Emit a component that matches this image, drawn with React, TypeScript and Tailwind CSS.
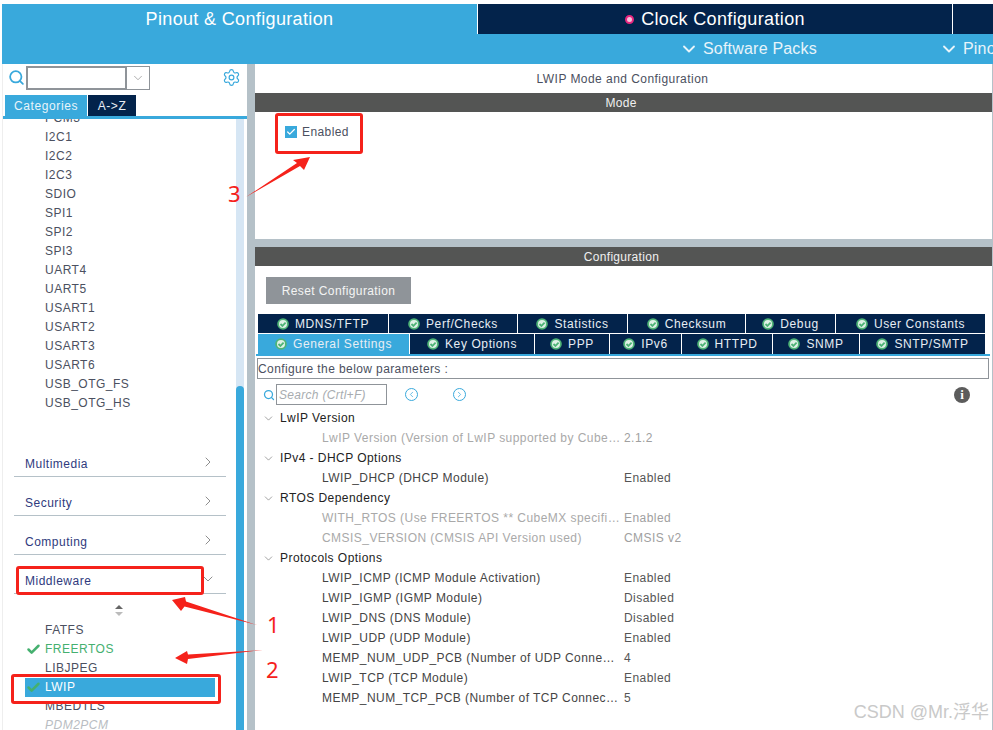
import { ChevronDown, ChevronRight, ChevronLeft, Search, Settings, Check } from 'lucide-react'

const UPPER_ROW = [
  { label: 'MDNS/TFTP', width: 'w-[131px]' },
  { label: 'Perf/Checks', width: 'w-[129px]' },
  { label: 'Statistics', width: 'w-[110px]' },
  { label: 'Checksum', width: 'w-[118px]' },
  { label: 'Debug', width: 'w-[90px]' },
  { label: 'User Constants', width: 'w-[150px]' },
]

const LOWER_ROW = [
  { label: 'General Settings', width: 'w-[152px]', active: true },
  { label: 'Key Options', width: 'w-[125px]' },
  { label: 'PPP', width: 'w-[75px]' },
  { label: 'IPv6', width: 'w-[72px]' },
  { label: 'HTTPD', width: 'w-[91px]' },
  { label: 'SNMP', width: 'w-[87px]' },
  { label: 'SNTP/SMTP', width: 'w-[126px]' },
]

const CONNECTIVITY = [
  'PCM3', 'I2C1', 'I2C2', 'I2C3', 'SDIO', 'SPI1', 'SPI2', 'SPI3', 'UART4', 'UART5',
  'USART1', 'USART2', 'USART3', 'USART6', 'USB_OTG_FS', 'USB_OTG_HS',
]

const TREE = [
  { title: 'LwIP Version', rows: [['LwIP Version (Version of LwIP supported by Cube…', '2.1.2', true]] },
  { title: 'IPv4 - DHCP Options', rows: [['LWIP_DHCP (DHCP Module)', 'Enabled']] },
  {
    title: 'RTOS Dependency',
    rows: [
      ['WITH_RTOS (Use FREERTOS ** CubeMX specifi…', 'Enabled', true],
      ['CMSIS_VERSION (CMSIS API Version used)', 'CMSIS v2', true],
    ],
  },
  {
    title: 'Protocols Options',
    rows: [
      ['LWIP_ICMP (ICMP Module Activation)', 'Enabled'],
      ['LWIP_IGMP (IGMP Module)', 'Disabled'],
      ['LWIP_DNS (DNS Module)', 'Disabled'],
      ['LWIP_UDP (UDP Module)', 'Enabled'],
      ['MEMP_NUM_UDP_PCB (Number of UDP Conne…', '4'],
      ['LWIP_TCP (TCP Module)', 'Enabled'],
      ['MEMP_NUM_TCP_PCB (Number of TCP Connec…', '5'],
    ],
  },
]

function TabCheck() {
  return (
    <svg width="12" height="12" viewBox="0 0 12 12" className="shrink-0">
      <circle cx="6" cy="6" r="5.8" fill="#4fb477" />
      <circle cx="6" cy="6" r="4" fill="#dff1e6" />
      <path d="M3.5 6 5.4 7.9 8.6 4.6" fill="none" stroke="#4fb477" strokeWidth="1.8" />
    </svg>
  )
}

function ConfigTab({ label, width, active }: { label: string; width: string; active?: boolean }) {
  return (
    <div
      className={
        'flex shrink-0 items-center justify-center gap-[6px] border-r border-white text-[12px] tracking-[0.6px] text-[#e8eef4] ' +
        width +
        (active ? ' bg-[#39a9dc]' : ' bg-[#03234b]')
      }
    >
      <TabCheck />
      <span>{label}</span>
    </div>
  )
}

function Accordion({ label, open }: { label: string; open?: boolean }) {
  return (
    <div className="ml-[11px] mr-[21px] flex h-[39px] items-end justify-between border-b border-[#b5c1c8] pb-[3px] pl-[11px] pr-[10px] text-[12px] tracking-[0.5px] text-[#2f3a7d]">
      <span className="leading-[18px]">{label}</span>
      {open ? (
        <ChevronDown size={16} strokeWidth={1} className="mb-[3px] text-[#555]" />
      ) : (
        <ChevronRight size={16} strokeWidth={1} className="mb-[3px] text-[#555]" />
      )}
    </div>
  )
}

function Sidebar() {
  return (
    <div className="relative w-[245px] shrink-0 overflow-hidden border-l border-[#eeeeee] tracking-[0.5px]">
      <div className="flex h-[31px] items-start pl-[5px] pt-[2px]">
        <Search size={17} strokeWidth={2.5} className="mt-[3px] text-[#39a9dc]" />
        <div className="ml-[1px] h-[24px] w-[101px] border-2 border-[#8f9499]" />
        <div className="flex h-[24px] w-[23px] items-center justify-center border border-l-0 border-[#8f9499] text-[#777]">
          <ChevronDown size={14} strokeWidth={1} />
        </div>
        <Settings size={19} strokeWidth={1.5} className="ml-[72px] mt-[2px] text-[#39a9dc]" />
      </div>
      <div className="flex h-[21px] pl-[1px]">
        <div className="ml-[1px] flex w-[82px] items-center justify-center bg-[#39a9dc] text-[12px] tracking-[0.6px] text-[#e8f4fa]">
          Categories
        </div>
        <div className="ml-[1px] flex w-[48px] items-center justify-center bg-[#03234b] text-[12px] tracking-[0.6px] text-[#e8eef4]">
          A-&gt;Z
        </div>
      </div>
      <div className="h-[3px] bg-[#39a9dc]" />

      <div className="h-[611px] overflow-hidden">
        <div className="h-[292px] overflow-hidden">
          <div className="-mt-[10px]">
            {CONNECTIVITY.map((name) => (
              <div key={name} className="h-[19px] pl-[42px] text-[12px] leading-[19px] text-[#4b5060]">
                {name}
              </div>
            ))}
          </div>
        </div>
        <div className="pt-[27px]">
          <Accordion label="Multimedia" />
          <Accordion label="Security" />
          <Accordion label="Computing" />
          <Accordion label="Middleware" open />
        </div>
        <div className="flex h-[27px] items-center justify-center pr-[12px] pt-[6px]">
          <svg width="10" height="11" viewBox="0 0 10 11">
            <path d="M5 0 9 4H1Z" fill="#666" />
            <path d="M5 11 9 7H1Z" fill="#bbb" />
          </svg>
        </div>
        <div className="text-[12px] leading-[19px]">
          <div className="h-[19px] pl-[42px] text-[#4b5060]">FATFS</div>
          <div className="flex h-[19px] items-center pl-[23px] text-[#45b06f]">
            <Check size={15} strokeWidth={4} className="mr-[4px]" />
            FREERTOS
          </div>
          <div className="h-[19px] pl-[42px] text-[#4b5060]">LIBJPEG</div>
          <div className="ml-[22px] flex h-[19px] w-[190px] items-center bg-[#39a9dc] pl-[1px] text-white">
            <Check size={15} strokeWidth={4} className="mr-[4px] text-[#45b06f]" />
            LWIP
          </div>
          <div className="h-[19px] pl-[42px] text-[#4b5060]">MBEDTLS</div>
          <div className="h-[19px] pl-[42px] italic text-[#b9bdc2]">PDM2PCM</div>
        </div>
      </div>

      {/* scrollbar sits on top of the list */}
      <div className="absolute bottom-0 right-[3px] top-[55px] w-[8px] bg-[#d6e6f4]">
        <div className="absolute bottom-0 left-0 right-0 top-[267px] rounded-t-[4px] bg-[#39a9dc]" />
      </div>
    </div>
  )
}

function ConfigPanel() {
  return (
    <div className="flex min-w-0 flex-1 flex-col border-r border-[#b5c1c8]">
      <div className="flex h-[29px] items-center justify-center pr-[2px] text-[12px] tracking-[0.45px] text-[#4b5060]">
        LWIP Mode and Configuration
      </div>
      <div className="flex h-[19px] items-center justify-center pr-[5px] text-[12px] tracking-[0.3px] bg-[#545554] text-[#f0f0f0]">
        Mode
      </div>
      <div className="flex h-[127px] items-start pl-[30px] pt-[14px]">
        <span className="flex h-[12px] w-[12px] items-center justify-center bg-[#39a9dc] text-white">
          <Check size={10} strokeWidth={3} />
        </span>
        <span className="ml-[5px] -mt-[2px] text-[12px] leading-[16px] tracking-[0.4px] text-[#4b5060]">Enabled</span>
      </div>
      <div className="h-[8px] bg-[#b5c1c8]" />
      <div className="flex h-[19px] items-center justify-center bg-[#545554] pr-[4px] text-[12px] tracking-[0.3px] text-[#f0f0f0]">
        Configuration
      </div>
      <div className="pl-[11px] pt-[11px]">
        <div className="flex h-[27px] w-[145px] items-center justify-center bg-[#8f9499] text-[12px] tracking-[0.4px] text-[#f4f4f4]">
          Reset Configuration
        </div>
      </div>
      <div className="mt-[9px] flex h-[20px] pl-[3px] pt-[1px]">
        {UPPER_ROW.map((tab) => (
          <ConfigTab key={tab.label} label={tab.label} width={tab.width} />
        ))}
      </div>
      <div className="flex h-[21px] pl-[3px] pt-[1px]">
        {LOWER_ROW.map((tab) => (
          <ConfigTab key={tab.label} label={tab.label} width={tab.width} active={tab.active} />
        ))}
      </div>
      <div className="ml-[1px] h-[2px] w-[734px] bg-[#39a9dc]" />
      <div className="ml-[2px] mt-[2px] flex h-[21px] w-[732px] items-center border border-[#8f9499] text-[12px] tracking-[0.4px] text-[#4b5060]">
        Configure the below parameters :
      </div>
      <div className="mt-[5px] flex h-[21px] items-center pl-[8px]">
        <Search size={12} strokeWidth={2.5} className="text-[#39a9dc]" />
        <div className="ml-[1px] flex h-[21px] w-[111px] items-center border border-[#8f9499] pl-[2px] text-[12px] italic tracking-[0.3px] text-[#a8acb0]">
          Search (Crtl+F)
        </div>
        <span className="ml-[18px] flex h-[13px] w-[13px] items-center justify-center rounded-full border border-[#39a9dc] text-[#39a9dc]">
          <ChevronLeft size={9} strokeWidth={2} />
        </span>
        <span className="ml-[35px] flex h-[13px] w-[13px] items-center justify-center rounded-full border border-[#39a9dc] text-[#39a9dc]">
          <ChevronRight size={9} strokeWidth={2} />
        </span>
        <span className="ml-[488px] flex h-[16px] w-[16px] items-center justify-center rounded-full bg-[#5c5c5c] font-['Liberation_Serif',serif] text-[13px] font-bold text-white">
          i
        </span>
      </div>
      <div className="pt-[3px]">
        {TREE.map((group) => (
          <div key={group.title}>
            <div className="flex h-[20px] items-center pl-[7px] text-[12px] tracking-[0.45px] text-[#222]">
              <ChevronDown size={13} strokeWidth={1} className="mr-[5px] text-[#555]" />
              {group.title}
            </div>
            {group.rows.map(([name, value, muted]) => (
              <div
                key={name as string}
                className={
                  'flex h-[20px] items-center whitespace-nowrap pl-[67px] text-[12px] tracking-[0.45px] ' +
                  (muted ? 'text-[#a9a9a9]' : 'text-[#444]')
                }
              >
                <span className="w-[302px] shrink-0">{name}</span>
                <span className={muted ? 'text-[#a0a0a0]' : 'text-[#555]'}>{value}</span>
              </div>
            ))}
          </div>
        ))}
      </div>
    </div>
  )
}

function Annotations() {
  return (
    <>
      <div className="absolute left-[275px] top-[113px] h-[41px] w-[88px] rounded-[3px] border-[3px] border-[#f5221b]" />
      <div className="absolute left-[16px] top-[566px] h-[29px] w-[188px] rounded-[3px] border-[3px] border-[#f5221b]" />
      <div className="absolute left-[11px] top-[674px] h-[30px] w-[210px] rounded-[3px] border-[3px] border-[#f5221b]" />
      <svg width="993" height="730" viewBox="0 0 993 730" className="pointer-events-none absolute left-0 top-0">
        <path d="M246 197 297 163 293 160 310 157 304 170 300 166Z" fill="#f5221b" />
        <path d="M257 625 186 601.5 185 597 172 600 181 611 184.5 606.5Z" fill="#f5221b" />
        <path d="M263 650 188 654.5 187 651 175 658 187 664 188 659Z" fill="#f5221b" />
      </svg>
      <span className="absolute left-[228px] top-[178px] font-['Noto_Sans',sans-serif] text-[22px] leading-[30px] text-[#f5221b]">3</span>
      <span className="absolute left-[267px] top-[609px] font-['Noto_Sans',sans-serif] text-[22px] leading-[30px] text-[#f5221b]">1</span>
      <span className="absolute left-[266px] top-[654px] font-['Noto_Sans',sans-serif] text-[22px] leading-[30px] text-[#f5221b]">2</span>
      <span className="absolute right-[4px] top-[700px] font-['Liberation_Sans','Noto_Sans_CJK_SC',sans-serif] text-[18px] leading-[24px] text-[#c9c9c9]">
        CSDN @Mr.浮华
      </span>
    </>
  )
}

export default function App() {
  return (
    <div className="relative h-[730px] w-[993px] overflow-hidden bg-white pl-[2px] pt-[4px] font-['Liberation_Sans',Arial,sans-serif]">
      <div className="flex h-[30px] text-[18px] tracking-[0.35px] text-white">
        <div className="flex w-[475px] items-center justify-center bg-[#39a9dc]">Pinout &amp; Configuration</div>
        <div className="flex w-[475px] items-center justify-center border-l border-white bg-[#03234b]">
          <span className="mr-[7px] h-[9px] w-[9px] rounded-full border-[2px] border-[#e6267f] bg-[#f7c3dc]" />
          Clock Configuration
        </div>
        <div className="flex-1 border-l border-white bg-[#03234b]" />
      </div>
      <div className="flex h-[30px] items-center overflow-hidden whitespace-nowrap bg-[#39a9dc] pl-[677px] text-[16px] tracking-[0.2px] text-[#e8f4fa]">
        <ChevronDown size={20} strokeWidth={2.2} className="mr-[4px] shrink-0" />
        <span>Software Packs</span>
        <ChevronDown size={20} strokeWidth={2.2} className="ml-[122px] mr-[4px] shrink-0" />
        <span>Pinout &amp; Consistency</span>
      </div>
      <div className="flex h-[666px]">
        <Sidebar />
        <div className="w-[8px] shrink-0 bg-[#b5c1c8]" />
        <ConfigPanel />
      </div>
      <Annotations />
    </div>
  )
}
